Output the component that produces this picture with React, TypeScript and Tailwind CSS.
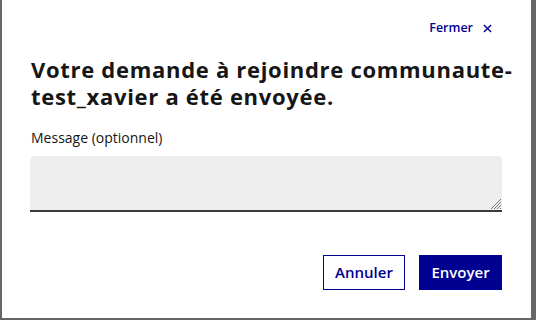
import React from 'react';

export default function App() {
  return (
    <div className="w-[536px] h-[320px] bg-[#666666] overflow-hidden" style={{ fontFamily: '"Open Sans", "Noto Sans", sans-serif' }}>
      <div className="ml-[2px] w-[529px] h-[318px] bg-white flex flex-col pl-[28px] pr-[29px]">
        {/* Header */}
        <div className="flex justify-end pt-[18px] pr-[10px]">
          <button className="flex items-center gap-[10px] text-[12.5px] font-semibold text-[#000091] leading-[20px]">
            Fermer
            <svg width="9" height="9" viewBox="0 0 10 10" fill="none" stroke="#000091" strokeWidth="1.6">
              <path d="M1 1 L9 9 M9 1 L1 9" />
            </svg>
          </button>
        </div>

        {/* Title */}
        <h1 className="ml-[1px] mt-[18px] text-[22px] leading-[27px] font-bold text-[#161616] whitespace-nowrap tracking-[0.7px]">
          Votre demande à rejoindre communaute-
          <br />
          test_xavier a été envoyée.
        </h1>

        {/* Message field */}
        <label className="ml-[1px] mt-[18px] text-[14px] leading-[20px] text-[#161616]">Message (optionnel)</label>
        <div className="relative mt-[8px] w-[472px] h-[56px] bg-[#eeeeee] rounded-t-[4px] border-b-2 border-[#3a3a3a]">
          <svg className="absolute right-[1px] bottom-[1px]" width="12" height="12" viewBox="0 0 12 12" stroke="#777" strokeWidth="1">
            <path d="M12 2 L2 12 M12 5 L5 12 M12 8 L8 12 M12 11 L11 12" />
          </svg>
        </div>

        {/* Actions */}
        <div className="mt-[43px] w-[472px] flex justify-end gap-[14px]">
          <button className="w-[82px] h-[35px] border border-[#000091] text-[#000091] text-[15px] font-semibold flex items-center justify-center">
            Annuler
          </button>
          <button className="w-[83px] h-[35px] bg-[#000091] text-white text-[15px] font-semibold flex items-center justify-center">
            Envoyer
          </button>
        </div>
      </div>
    </div>
  );
}
